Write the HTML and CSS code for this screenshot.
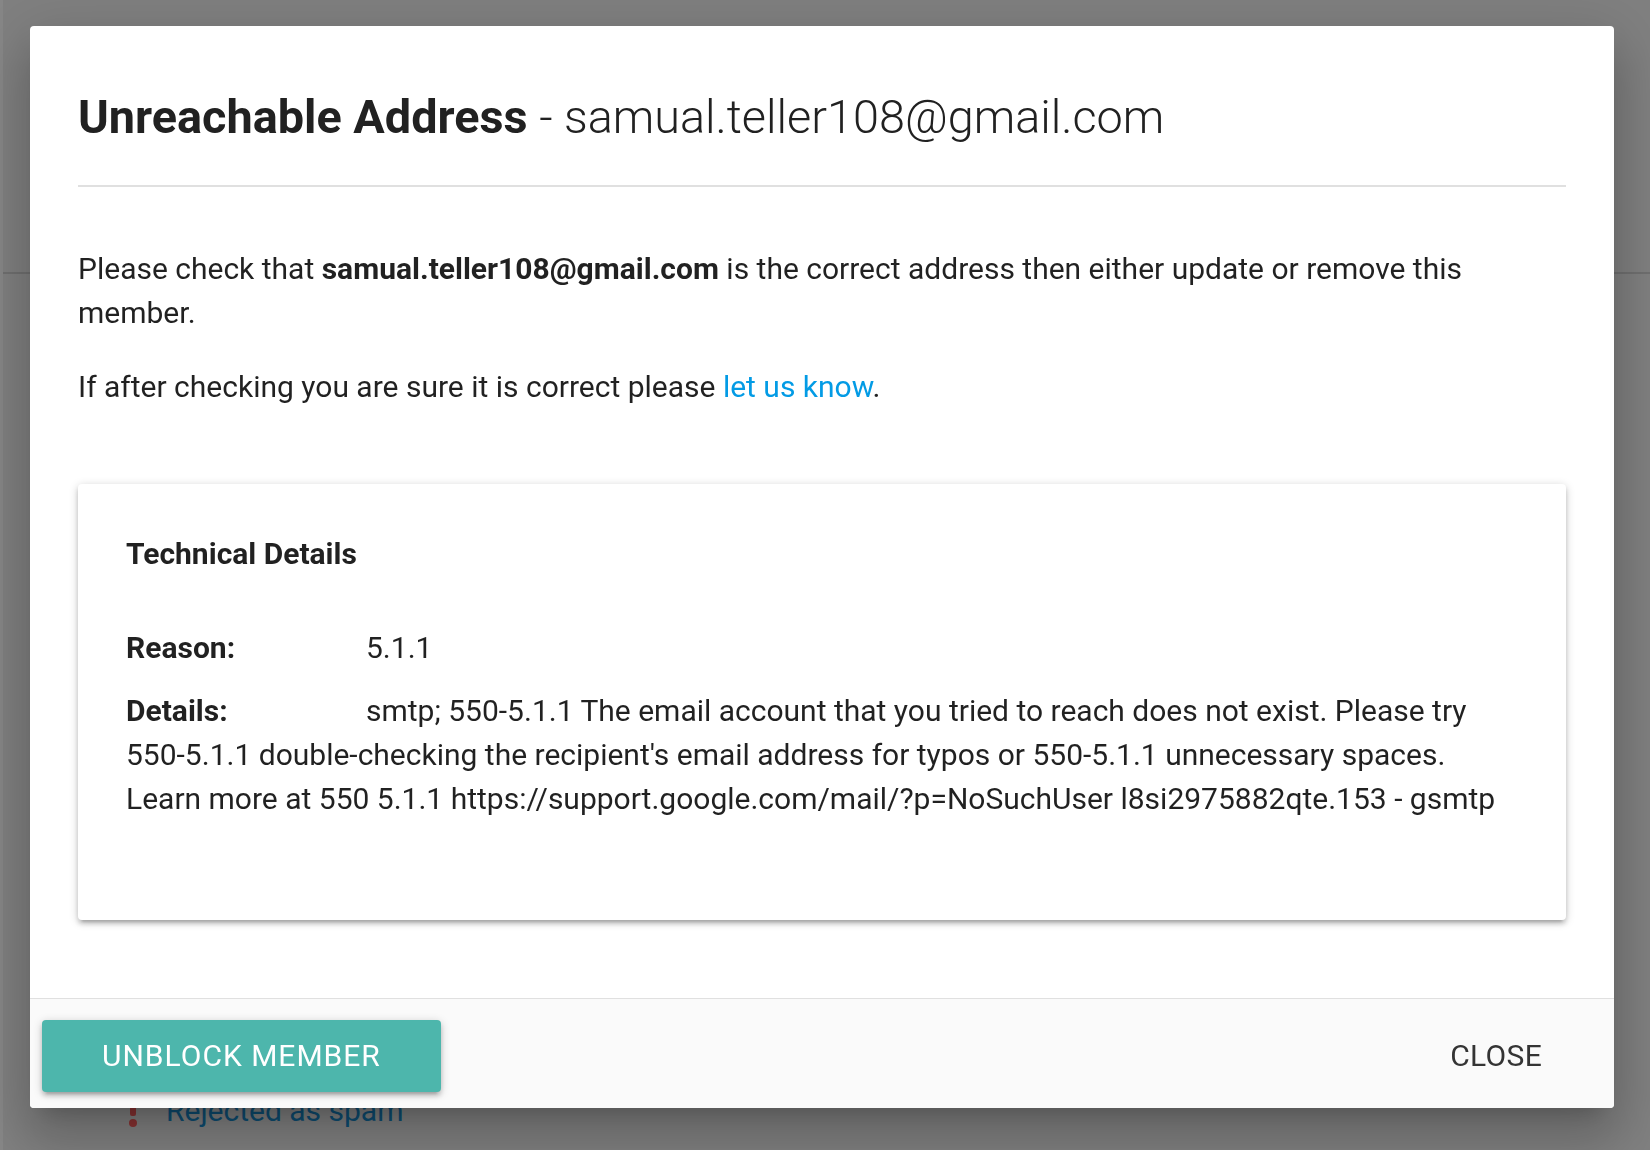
FILE: index.html
```html
<!DOCTYPE html>
<html lang="en">
<head>
<meta charset="utf-8">
<title>Unreachable Address</title>
<link rel="stylesheet" href="styles.css">
</head>
<body>
<div class="page">
  <div class="page-top"></div>
  <div class="spam-row">
    <svg class="bang" width="14" height="40" viewBox="0 0 14 40" aria-hidden="true">
      <rect x="4" y="0" width="6" height="26" rx="2" fill="#8a3232"/>
      <circle cx="7" cy="33" r="4" fill="#8a3232"/>
    </svg>
    <span class="spam-text">Rejected as spam</span>
  </div>
</div>

<div class="modal" role="dialog">
  <div class="modal-content">
    <h4 class="modal-title">Unreachable Address <span class="addr">- samual.teller108@gmail.com</span></h4>
    <p class="msg first">Please check that <strong>samual.teller108@gmail.com</strong> is the correct address then either update or remove this member.</p>
    <p class="msg">If after checking you are sure it is correct please <a class="link" href="#">let us know</a>.</p>

    <div class="card">
      <div class="card-title">Technical Details</div>
      <div class="detail-row"><span class="label">Reason:</span>5.1.1</div>
      <div class="detail-row last"><span class="label">Details:</span>smtp; <span class="nw">550-5.1.1</span> The email account that you tried to reach does not exist. Please try <span class="nw">550-5.1.1</span> double-checking the recipient's email address for typos or <span class="nw">550-5.1.1</span> unnecessary spaces. Learn more at 550 5.1.1 https://support.google.com/mail/?p=NoSuchUser l8si2975882qte.153 - gsmtp</div>
    </div>
  </div>
  <div class="modal-footer">
    <a class="btn" href="#">Unblock member</a>
    <a class="btn-flat" href="#">Close</a>
  </div>
</div>
</body>
</html>
```

FILE: styles.css
```css
* {
  box-sizing: border-box;
}

html,
body {
  margin: 0;
  height: 100%;
}

body {
  background: #808080;
  font-family: Roboto, "Noto Sans", "Liberation Sans", sans-serif;
  color: rgba(0, 0, 0, 0.87);
  overflow: hidden;
}

/* dimmed page behind the dialog */
.page {
  height: 100vh;
  display: flex;
  flex-direction: column;
  justify-content: space-between;
  border-left: 3px solid #878787;
}

.page-top {
  height: 274px;
  border-bottom: 2px solid #707070;
}

.spam-row {
  display: flex;
  align-items: center;
  gap: 26px;
  padding: 0 0 17px 123px;
  height: 62px;
}

.bang {
  display: block;
  margin-top: -2px;
}

.spam-text {
  font-size: 30px;
  line-height: 45px;
  color: #0d4d72;
}

/* dialog */
.modal {
  position: fixed;
  top: 26px;
  left: 30px;
  width: 1584px;
  background: #fff;
  border-radius: 4px;
  overflow: hidden;
  box-shadow: 0 32px 48px 4px rgba(0, 0, 0, 0.14),
    0 12px 60px 10px rgba(0, 0, 0, 0.12),
    0 16px 20px -14px rgba(0, 0, 0, 0.2);
}

.modal-content {
  padding: 65px 48px 78px;
}

.modal-title {
  margin: 0;
  font-size: 46.8px;
  line-height: 52px;
  font-weight: 700;
  padding-bottom: 42px;
  border-bottom: 2px solid #e0e0e0;
  color: #212121;
}

.addr {
  font-weight: 300;
}

.msg {
  margin: 0 0 30px;
  font-size: 30px;
  line-height: 44px;
}

.msg.first {
  margin-top: 60px;
}

.msg strong {
  font-weight: 700;
}

.link {
  color: #039be5;
  text-decoration: none;
}

.card {
  margin-top: 75px;
  padding: 48px;
  background: #fff;
  border-radius: 4px;
  box-shadow: 0 4px 4px 0 rgba(0, 0, 0, 0.14),
    0 6px 2px -4px rgba(0, 0, 0, 0.12),
    0 2px 10px 0 rgba(0, 0, 0, 0.2);
}

.card-title {
  font-size: 30px;
  line-height: 44px;
  font-weight: 700;
  margin-bottom: 50px;
}

.detail-row {
  font-size: 30px;
  line-height: 44px;
  margin-bottom: 19px;
}

.detail-row.last {
  margin-bottom: 51px;
}

.label {
  display: inline-block;
  width: 240px;
  font-weight: 700;
}

.nw {
  white-space: nowrap;
}

.modal-footer {
  height: 110px;
  padding: 9px 12px 0;
  background: #fafafa;
  border-top: 1px solid #e0e0e0;
  display: flex;
  justify-content: space-between;
  align-items: flex-start;
}

.btn,
.btn-flat {
  display: inline-block;
  margin: 12px 0;
  height: 72px;
  line-height: 72px;
  padding: 0 60px;
  font-size: 30px;
  letter-spacing: 1px;
  text-transform: uppercase;
  text-decoration: none;
  border-radius: 4px;
}

.btn {
  background: #4db6ac;
  color: #fff;
  box-shadow: 0 4px 4px 0 rgba(0, 0, 0, 0.14),
    0 6px 2px -4px rgba(0, 0, 0, 0.12),
    0 2px 10px 0 rgba(0, 0, 0, 0.2);
}

.btn-flat {
  background: transparent;
  color: #343434;
  letter-spacing: 0.3px;
}
```
